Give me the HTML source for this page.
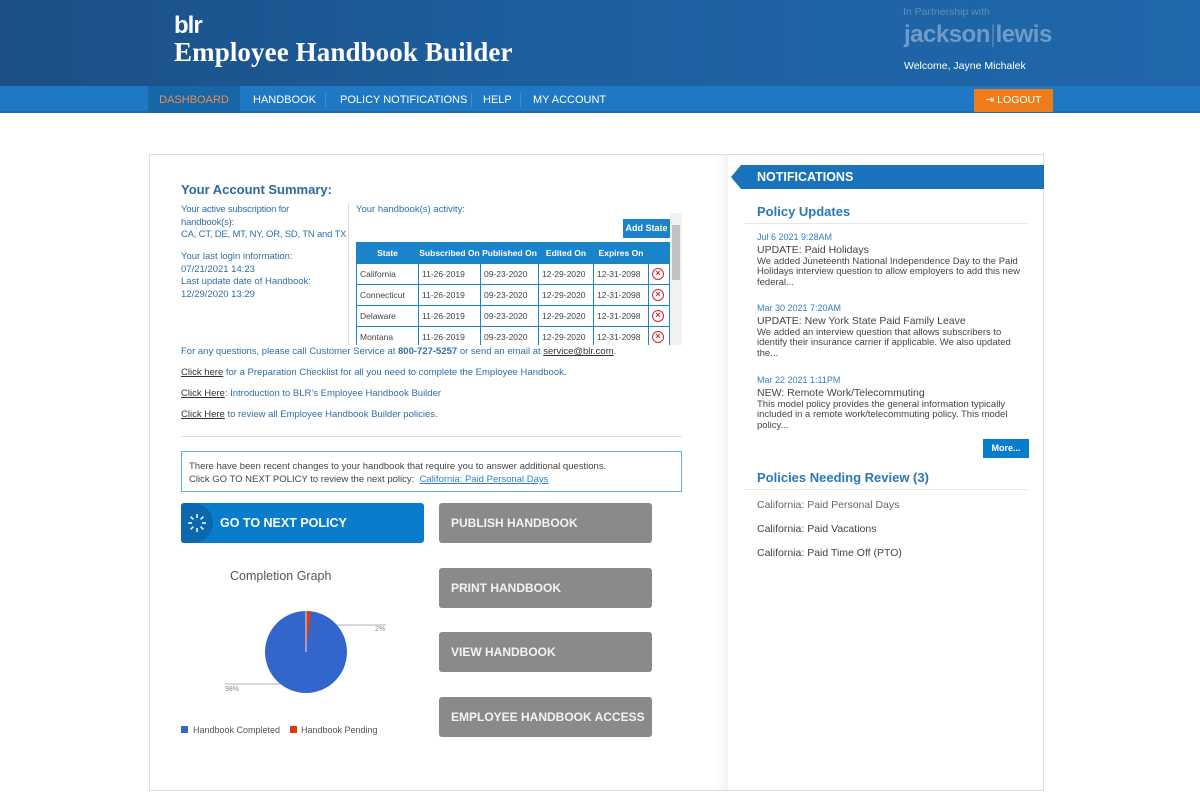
<!DOCTYPE html>
<html><head><meta charset="utf-8"><style>
*{margin:0;padding:0;box-sizing:border-box}
body{width:1200px;height:799px;background:#fff;font-family:"Liberation Sans",sans-serif;position:relative;overflow:hidden;color:#555}
.a{position:absolute}
.hdr{left:0;top:0;width:1200px;height:86px;background:linear-gradient(90deg,#1b4f86 0%,#1d60a0 50%,#1f68ab 100%)}
.nav{left:0;top:86px;width:1200px;height:27px;background:#1f78c4;border-bottom:2px solid #1a6cb2}
.nav span{position:absolute;top:1px;height:27px;line-height:27px;color:#fff;font-size:11px}
.sep{position:absolute;top:7px;width:1px;height:14px;background:#3f8ccc}
.box{left:149px;top:154px;width:895px;height:637px;border:1px solid #ddd}
.t{font-size:9.5px;color:#2f6fa6;line-height:12.6px;white-space:nowrap}
table{border-collapse:collapse;font-size:8.5px;table-layout:fixed}
td,th{border:1px solid #1a83c9;height:21px;padding:0 3px;white-space:nowrap;overflow:hidden}
th{background:#1a83c9;color:#fff;font-size:8.5px;text-align:center;padding:0}
td{color:#444}
.x{display:inline-block;width:12px;height:12px;border:1.5px solid #d0272b;border-radius:50%;color:#d0272b;font-size:9px;line-height:9px;text-align:center;font-weight:bold}
.lnk{font-size:9.5px;color:#2f6fa6;white-space:nowrap}
.lnk u{color:#333}
.gb{background:#8a8a8a;color:#f3f3f3;font-weight:bold;font-size:12px;border-radius:3px;width:213px;height:40px;line-height:41px;padding-left:12px;white-space:nowrap}
.ntxt{font-size:9.5px;color:#444;line-height:10.5px}
.nd{font-size:9px;color:#2f7fc0}
</style></head><body>
<div class="a hdr"></div>
<div class="a" style="left:174px;top:14px;color:#fff;font-weight:bold;font-size:24px;letter-spacing:-1px;line-height:24px">blr</div>
<div class="a" style="left:174px;top:37px;color:#fff;font-family:'Liberation Serif',serif;font-weight:bold;font-size:27px;line-height:30px;letter-spacing:0.1px">Employee Handbook Builder</div>
<div class="a" style="left:903px;top:6px;color:#5d8fbe;font-size:10.5px">In Partnership with</div>
<div class="a" style="left:904px;top:21px;color:#6f9bc8;font-size:24px;font-weight:bold;letter-spacing:-0.5px">jackson<span style="font-weight:normal;color:#4d7fb2">|</span>lewis</div>
<div class="a" style="left:904px;top:60px;color:#fff;font-size:10.5px">Welcome, Jayne Michalek</div>
<div class="a nav">
<span style="left:148px;width:92px;background:#1766a8;color:#e98d4f;text-align:center;top:0;height:27px;line-height:28px">DASHBOARD</span>
<span style="left:253px">HANDBOOK</span><i class="sep" style="left:325px"></i>
<span style="left:340px">POLICY NOTIFICATIONS</span><i class="sep" style="left:471px"></i>
<span style="left:483px">HELP</span><i class="sep" style="left:520px"></i>
<span style="left:533px">MY ACCOUNT</span>
<span style="left:974px;top:3px;width:79px;height:23px;line-height:23px;background:#ef7c1a;text-align:center;font-size:10.5px">⇥ LOGOUT</span>
</div>
<div class="a box"></div>
<div class="a" style="left:181px;top:182px;font-size:13px;font-weight:bold;color:#2a6aa3">Your Account Summary:</div>
<div class="a t" style="left:181px;top:204px;letter-spacing:-0.2px">Your active subscription for<br>handbook(s):<br>CA, CT, DE, MT, NY, OR, SD, TN and TX</div>
<div class="a t" style="left:181px;top:251px">Your last login information:<br>07/21/2021 14:23<br>Last update date of Handbook:<br>12/29/2020 13:29</div>
<div class="a" style="left:348px;top:203px;width:1px;height:142px;background:#ddd"></div>
<div class="a t" style="left:356px;top:204px">Your handbook(s) activity:</div>
<div class="a" style="left:623px;top:219px;width:47px;height:19px;background:#1a83c9;color:#fff;font-size:9px;font-weight:bold;line-height:19px;text-align:center">Add State</div>
<div class="a" style="left:670px;top:213px;width:12px;height:132px;background:#f1f1f1"><div style="margin-top:12px;margin-left:2px;width:8px;height:55px;background:#c1c1c1"></div></div>
<div class="a" style="left:356px;top:242px;width:314px;height:103px;overflow:hidden">
<table style="width:313px">
<colgroup><col style="width:62px"><col style="width:62px"><col style="width:58px"><col style="width:55px"><col style="width:55px"><col style="width:21px"></colgroup>
<tr><th>State</th><th>Subscribed On</th><th>Published On</th><th>Edited On</th><th>Expires On</th><th></th></tr>
<tr><td>California</td><td>11-26-2019</td><td>09-23-2020</td><td>12-29-2020</td><td>12-31-2098</td><td><span class="x">×</span></td></tr>
<tr><td>Connecticut</td><td>11-26-2019</td><td>09-23-2020</td><td>12-29-2020</td><td>12-31-2098</td><td><span class="x">×</span></td></tr>
<tr><td>Delaware</td><td>11-26-2019</td><td>09-23-2020</td><td>12-29-2020</td><td>12-31-2098</td><td><span class="x">×</span></td></tr>
<tr><td>Montana</td><td>11-26-2019</td><td>09-23-2020</td><td>12-29-2020</td><td>12-31-2098</td><td><span class="x">×</span></td></tr>
</table></div>
<div class="a lnk" style="left:181px;top:346px">For any questions, please call Customer Service at <b>800-727-5257</b> or send an email at <u>service@blr.com</u>.</div>
<div class="a lnk" style="left:181px;top:367px"><u>Click here</u> for a Preparation Checklist for all you need to complete the Employee Handbook.</div>
<div class="a lnk" style="left:181px;top:388px"><u>Click Here</u>: Introduction to BLR's Employee Handbook Builder</div>
<div class="a lnk" style="left:181px;top:409px"><u>Click Here</u> to review all Employee Handbook Builder policies.</div>
<div class="a" style="left:181px;top:436px;width:501px;height:1px;background:#ddd"></div>
<div class="a" style="left:181px;top:451px;width:501px;height:41px;border:1px solid #5fb0e0;font-size:9.5px;color:#444;padding:8px 0 0 7px;line-height:13px">There have been recent changes to your handbook that require you to answer additional questions.<br>Click GO TO NEXT POLICY to review the next policy:&nbsp; <u style="color:#2f7fc0">California: Paid Personal Days</u></div>
<div class="a" style="left:181px;top:503px;width:243px;height:40px;background:#0a7ccc;border-radius:3px;overflow:hidden">
<div style="position:absolute;left:-16px;top:0;width:48px;height:40px;border-radius:20px;background:#0b67ae"></div>
<svg style="position:absolute;left:6px;top:10px" width="20" height="20" stroke="#fff" stroke-width="1.5"><path d="M10 1v4M10 15v4M1 10h4M15 10h4M3.6 3.6l2.8 2.8M13.6 13.6l2.8 2.8M3.6 16.4l2.8-2.8M13.6 6.4l2.8-2.8"/></svg>
<div style="position:absolute;left:39px;top:0;line-height:41px;color:#fff;font-weight:bold;font-size:12.5px">GO TO NEXT POLICY</div></div>
<div class="a gb" style="left:439px;top:503px">PUBLISH HANDBOOK</div>
<div class="a gb" style="left:439px;top:568px">PRINT HANDBOOK</div>
<div class="a gb" style="left:439px;top:632px">VIEW HANDBOOK</div>
<div class="a gb" style="left:439px;top:697px">EMPLOYEE HANDBOOK ACCESS</div>
<div class="a" style="left:230px;top:569px;font-size:12.5px;color:#555">Completion Graph</div>
<svg class="a" style="left:170px;top:600px" width="260" height="150">
<line x1="55" y1="84" x2="136" y2="84" stroke="#999" stroke-width="0.8"/>
<line x1="140" y1="25" x2="216" y2="25" stroke="#999" stroke-width="0.8"/>
<circle cx="136" cy="52" r="41" fill="#3366cc"/>
<path d="M136 52 L136 11 A41 41 0 0 1 141 11.3 Z" fill="#dc3912"/>
<line x1="136" y1="52" x2="136" y2="11" stroke="#fff" stroke-width="0.8"/>
<text x="205" y="31" font-size="7" fill="#888">2%</text>
<text x="55" y="91" font-size="7" fill="#888">98%</text>
<rect x="11" y="126" width="7" height="7" fill="#3366cc"/><text x="23" y="133" font-size="9" fill="#555">Handbook Completed</text>
<rect x="120" y="126" width="7" height="7" fill="#dc3912"/><text x="131" y="133" font-size="9" fill="#555">Handbook Pending</text>
</svg>
<div class="a" style="left:716px;top:155px;width:12px;height:635px;background:linear-gradient(90deg,#fff,#f3f3f3)"></div>
<svg class="a" style="left:731px;top:165px" width="313" height="24"><path d="M10 0H313V24H10L0 12Z" fill="#1a73ba"/></svg>
<div class="a" style="left:757px;top:170px;color:#fff;font-weight:bold;font-size:12.5px">NOTIFICATIONS</div>
<div class="a" style="left:757px;top:204px;color:#2a78b8;font-size:13px;font-weight:bold">Policy Updates</div>
<div class="a" style="left:745px;top:223px;width:283px;height:1px;background:#e6e6e6"></div>
<div class="a nd" style="left:757px;top:232px">Jul 6 2021 9:28AM</div>
<div class="a ntxt" style="left:757px;top:245px;width:272px"><span style="font-size:10.5px">UPDATE: Paid Holidays</span><br>We added Juneteenth National Independence Day to the Paid Holidays interview question to allow employers to add this new federal...</div>
<div class="a nd" style="left:757px;top:303px">Mar 30 2021 7:20AM</div>
<div class="a ntxt" style="left:757px;top:316px;width:272px"><span style="font-size:10.5px">UPDATE: New York State Paid Family Leave</span><br>We added an interview question that allows subscribers to identify their insurance carrier if applicable. We also updated the...</div>
<div class="a nd" style="left:757px;top:375px">Mar 22 2021 1:11PM</div>
<div class="a ntxt" style="left:757px;top:388px;width:272px"><span style="font-size:10.5px">NEW: Remote Work/Telecommuting</span><br>This model policy provides the general information typically included in a remote work/telecommuting policy. This model policy...</div>
<div class="a" style="left:983px;top:439px;width:46px;height:19px;background:#0a7ccc;color:#fff;font-size:9px;font-weight:bold;line-height:19px;text-align:center">More...</div>
<div class="a" style="left:757px;top:470px;color:#2a78b8;font-size:13px;font-weight:bold">Policies Needing Review (3)</div>
<div class="a" style="left:745px;top:489px;width:283px;height:1px;background:#e6e6e6"></div>
<div class="a" style="left:757px;top:499px;font-size:10.5px;color:#666">California: Paid Personal Days</div>
<div class="a" style="left:757px;top:523px;font-size:10.5px;color:#444">California: Paid Vacations</div>
<div class="a" style="left:757px;top:547px;font-size:10.5px;color:#444">California: Paid Time Off (PTO)</div>
</body></html>
